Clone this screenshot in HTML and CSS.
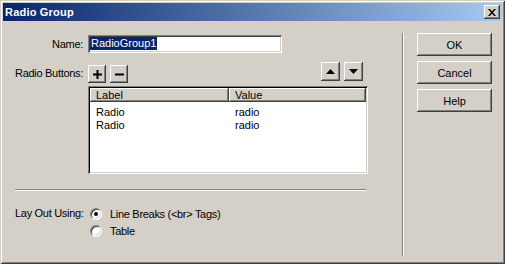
FILE: index.html
```html
<!DOCTYPE html>
<html lang="en">

<head>
    <meta charset="UTF-8">
    <title>Radio Group</title>
    <link rel="stylesheet" href="styles.css">
</head>

<body>
    <div class="dialog">
        <div class="titlebar">
            <span class="title">Radio Group</span>
            <span class="close">
                <svg width="8" height="7" viewBox="0 0 8 7">
                    <path d="M0 0h2l2 2.5 2-2.5h2l-3 3.5 3 3.5h-2l-2-2.5-2 2.5h-2l3-3.5z" fill="#000"/>
                </svg>
            </span>
        </div>
        <div class="content">
            <div class="form">
                <div class="row name-row">
                    <span class="label">Name:</span>
                    <div class="textbox"><span class="sel">RadioGroup1</span></div>
                </div>

                <div class="row tools-row">
                    <span class="label">Radio Buttons:</span>
                    <div class="tools">
                        <div class="group plus-minus">
                            <span class="tool">
                                <svg width="9" height="9" viewBox="0 0 9 9"><path d="M3.5 0h2v3.5h3.5v2h-3.5v3.5h-2v-3.5h-3.5v-2h3.5z" fill="#000"/></svg>
                            </span>
                            <span class="tool">
                                <svg width="9" height="9" viewBox="0 0 9 9"><path d="M0 3.5h9v2h-9z" fill="#000"/></svg>
                            </span>
                        </div>
                        <div class="group arrows">
                            <span class="tool big">
                                <svg width="9" height="5" viewBox="0 0 9 5"><path d="M4.5 0l4.5 5h-9z" fill="#000"/></svg>
                            </span>
                            <span class="tool big">
                                <svg width="9" height="5" viewBox="0 0 9 5"><path d="M0 0h9l-4.5 5z" fill="#000"/></svg>
                            </span>
                        </div>
                    </div>
                </div>

                <div class="listview">
                    <div class="list-head">
                        <span class="head-cell">Label</span>
                        <span class="head-cell">Value</span>
                    </div>
                    <div class="list-body">
                        <div class="list-row"><span>Radio</span><span>radio</span></div>
                        <div class="list-row"><span>Radio</span><span>radio</span></div>
                    </div>
                </div>

                <div class="separator"></div>

                <div class="row layout-row">
                    <span class="label">Lay Out Using:</span>
                    <div class="radios">
                        <div class="radio-item"><span class="radio checked"></span>Line Breaks (&lt;br&gt; Tags)</div>
                        <div class="radio-item"><span class="radio"></span>Table</div>
                    </div>
                </div>
            </div>

            <div class="vsep"></div>

            <div class="actions">
                <span class="btn">OK</span>
                <span class="btn">Cancel</span>
                <span class="btn">Help</span>
            </div>
        </div>
    </div>
</body>

</html>
```

FILE: styles.css
```css
body {
    margin: 0;
    font-family: "Liberation Sans", Arial, sans-serif;
    font-size: 11px;
    color: #000;
    background-color: #d4d0c8;
}

.dialog {
    width: 505px;
    height: 264px;
    box-sizing: border-box;
    padding: 3px;
    background-color: #d4d0c8;
    box-shadow: inset 1px 1px #d4d0c8, inset -1px -1px #404040, inset 2px 2px #fff, inset -2px -2px #808080;
    display: flex;
    flex-direction: column;
}

.titlebar {
    height: 18px;
    flex-shrink: 0;
    background: linear-gradient(to right, #0a246a, #a6caf0);
    display: flex;
    align-items: center;
    justify-content: space-between;
    padding: 0 2px;
}

.title {
    color: white;
    font-weight: bold;
    font-size: 11px;
    letter-spacing: 0.2px;
}

.close {
    width: 16px;
    height: 14px;
    box-sizing: border-box;
    background-color: #d4d0c8;
    box-shadow: inset -1px -1px #404040, inset 1px 1px #fff, inset -2px -2px #808080;
    display: flex;
    align-items: center;
    justify-content: center;
}

.content {
    flex: 1;
    display: flex;
}

.form {
    width: 399px;
    box-sizing: border-box;
    padding: 14px 0 0 12px;
}

.row {
    display: flex;
}

.label {
    width: 73px;
    box-sizing: border-box;
    padding-right: 5px;
    text-align: right;
    white-space: nowrap;
    letter-spacing: -0.3px;
}

.name-row {
    height: 18px;
    align-items: center;
}

.textbox {
    width: 194px;
    height: 18px;
    box-sizing: border-box;
    padding: 3px 3px;
    background-color: white;
    box-shadow: inset 1px 1px #808080, inset -1px -1px #fff, inset 2px 2px #404040, inset -2px -2px #d4d0c8;
    display: flex;
}

.sel {
    background-color: #0a246a;
    color: white;
    height: 13px;
    line-height: 13px;
    margin-top: -1px;
    margin-left: -1px;
    padding: 0 1px;
}

.tools-row {
    margin-top: 9px;
    height: 21px;
    align-items: center;
}

.tools {
    width: 280px;
    height: 21px;
    display: flex;
    justify-content: space-between;
}

.group {
    display: flex;
    gap: 4px;
}

.plus-minus {
    align-self: flex-end;
}

.arrows {
    margin-right: 5px;
}

.tool {
    width: 18px;
    height: 18px;
    box-sizing: border-box;
    background-color: #d4d0c8;
    box-shadow: inset -1px -1px #404040, inset 1px 1px #fff, inset -2px -2px #808080;
    display: flex;
    align-items: center;
    justify-content: center;
}

.tool.big {
    width: 19px;
    height: 19px;
}

.listview {
    margin-left: 73px;
    margin-top: 3px;
    width: 280px;
    height: 88px;
    box-sizing: border-box;
    padding: 2px;
    background-color: white;
    box-shadow: inset 1px 1px #808080, inset -1px -1px #fff, inset 2px 2px #000, inset -2px -2px #d4d0c8;
}

.list-head {
    display: grid;
    grid-template-columns: 139px 1fr;
    height: 14px;
}

.head-cell {
    background-color: #d4d0c8;
    box-shadow: inset -1px -1px #404040, inset 1px 1px #fff, inset -2px -2px #808080;
    padding-left: 6px;
    line-height: 14px;
}

.list-body {
    padding-top: 4px;
}

.list-row {
    display: grid;
    grid-template-columns: 139px 1fr;
    height: 13px;
    line-height: 13px;
}

.list-row span {
    padding-left: 6px;
}

.separator {
    margin-top: 15px;
    width: 351px;
    height: 0;
    border-top: 1px solid #808080;
    border-bottom: 1px solid #fff;
}

.layout-row {
    margin-top: 14px;
}

.layout-row .label {
    line-height: 17px;
}

.radios {
    display: flex;
    flex-direction: column;
}

.radio-item {
    height: 17px;
    display: flex;
    align-items: center;
    gap: 8px;
    padding-left: 2px;
    letter-spacing: -0.3px;
}

.radio {
    width: 12px;
    height: 12px;
    box-sizing: border-box;
    border-radius: 50%;
    background-color: white;
    border: 1px solid;
    border-color: #808080 #fff #fff #808080;
    box-shadow: inset 1px 1px #404040, inset -1px -1px #d4d0c8;
    display: flex;
    align-items: center;
    justify-content: center;
}

.radio.checked::after {
    content: "";
    width: 4px;
    height: 4px;
    border-radius: 50%;
    background-color: #000;
}

.vsep {
    width: 0;
    margin: 12px 0 5px;
    border-left: 1px solid #808080;
    border-right: 1px solid #fff;
}

.actions {
    padding: 12px 0 0 13px;
    display: flex;
    flex-direction: column;
    gap: 5px;
}

.btn {
    width: 75px;
    height: 23px;
    box-sizing: border-box;
    background-color: #d4d0c8;
    box-shadow: inset -1px -1px #404040, inset 1px 1px #fff, inset -2px -2px #808080;
    display: flex;
    align-items: center;
    justify-content: center;
}
```
